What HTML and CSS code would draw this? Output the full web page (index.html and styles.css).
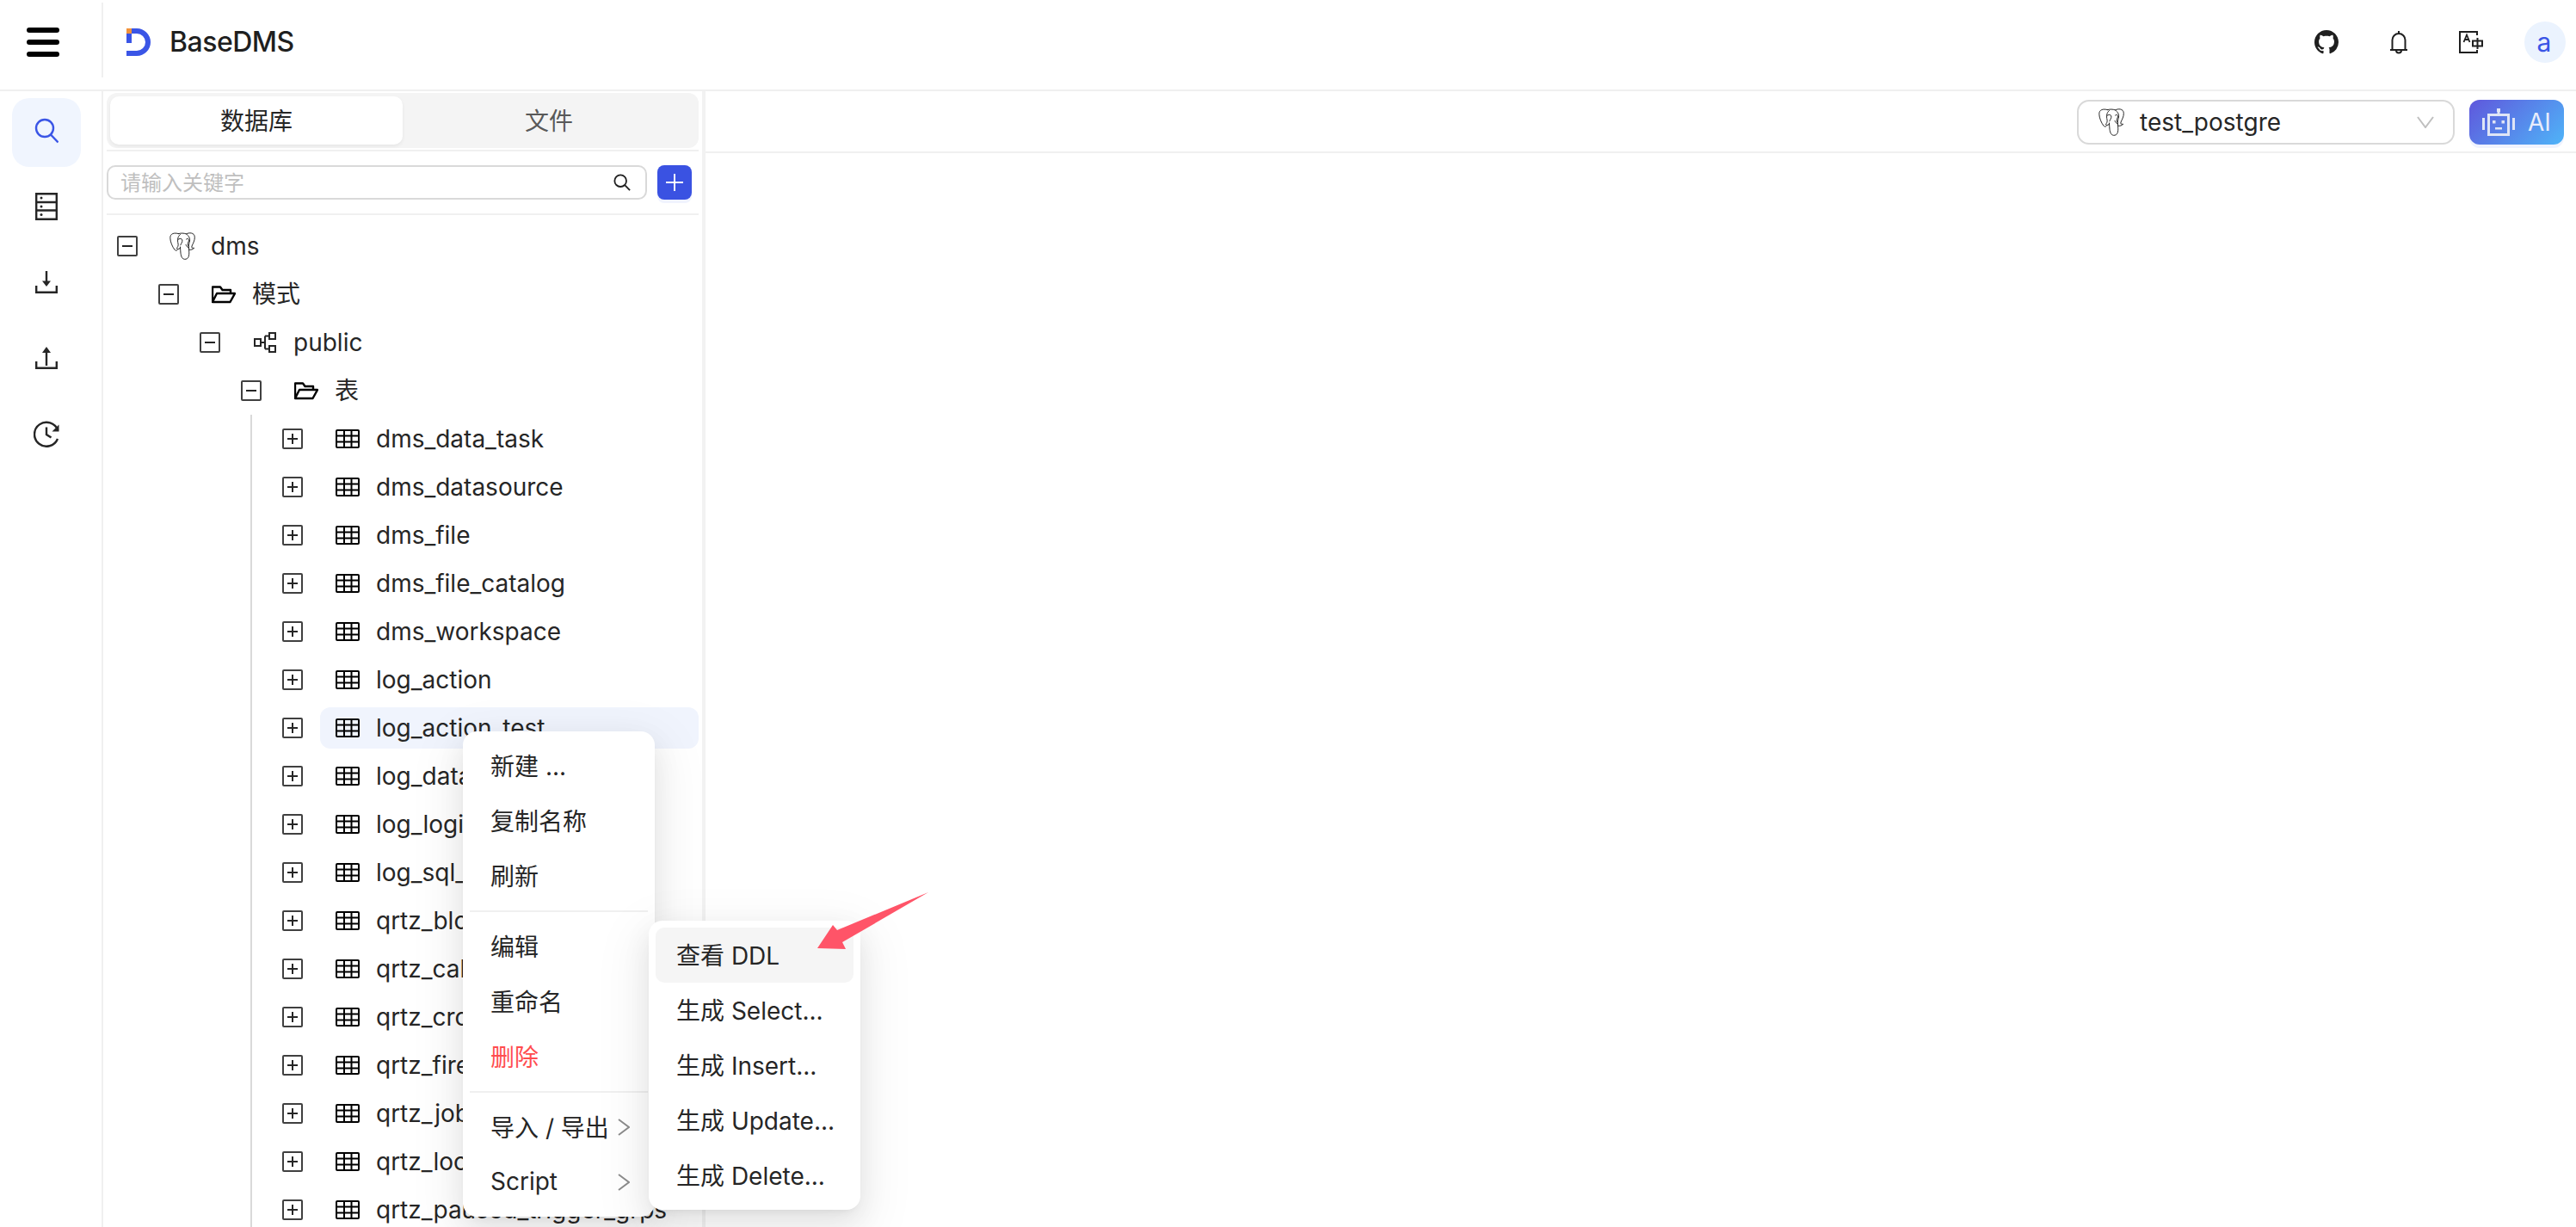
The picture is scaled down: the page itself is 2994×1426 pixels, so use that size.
FILE: index.html
```html
<!DOCTYPE html>
<html lang="zh-CN">
<head>
<meta charset="utf-8">
<title>BaseDMS</title>
<link rel="stylesheet" href="styles.css">
</head>
<body>
<svg class="defs" width="0" height="0" aria-hidden="true">
  <symbol id="pg" viewBox="0 0 30 32">
    <g fill="none" stroke="#111" stroke-width=".9" stroke-linecap="round" stroke-linejoin="round">
      <path d="M10.5 1.6C5.5.2 .8 1.2 .8 6.5c0 4.500 2.700 10.500 5 13.500 1.500 1.800 3.200 1.300 4-.5"/>
      <path d="M10.500 1.600c2.800-.8 6-.8 9 .3 3-1.700 9.500-2 9.800 3.600.2 4-2 7.500-3.300 10.500-.6 2 .3 2.500 2.600 2.200-1 1.700-4 2.500-5.800 2"/>
      <path d="M12.500 2.500C9.500 4.500 9 9 10 13c.6 2.500-.5 4.500-1.800 5.500 1.500 1.500 4 1 4.300-.5"/>
      <path d="M19.500 1.900c3 2 5 5.500 3.700 9.500-.9 3-1 5.500-.6 9 .4 4.500.5 10-3.600 10.800-4.500.8-5.500-3.500-6-7-.3-2.300-.3-5-.5-7.200"/>
      <path d="M9.800 8.500c1.500-1.700 4.500-1.500 5 .3.600 2-1.200 4.200-2 6"/>
      <path d="M19.500 8c1-1 2.800-.6 3 .6.300 1.800-1 3-1.300 4.900-.1 1.200.3 2 .7 2.700"/>
      <path d="M19 14.500c.7 1.500 1.500 2.800 3.400 3.500"/>
    </g>
  </symbol>
  <symbol id="minus" viewBox="0 0 24 24">
    <rect x="1" y="1" width="22" height="22" rx="1" fill="#fff" stroke="#404040" stroke-width="2"/>
    <path d="M6 12h12" stroke="#262626" stroke-width="2"/>
  </symbol>
  <symbol id="plus" viewBox="0 0 24 24">
    <rect x="1" y="1" width="22" height="22" rx="1" fill="#fff" stroke="#404040" stroke-width="2"/>
    <path d="M6 12h12M12 6v12" stroke="#262626" stroke-width="2"/>
  </symbol>
  <symbol id="folder" viewBox="0 0 28 22">
    <path d="M1 20V2.500h9l2.500 3.500H22v4M1 20h20.500L27 10H6L1 20Z" fill="none" stroke="#000" stroke-width="2.400" stroke-linejoin="round"/>
  </symbol>
  <symbol id="table" viewBox="0 0 28 22">
    <rect x="1" y="1" width="26" height="20" rx="1" fill="none" stroke="#000" stroke-width="2"/>
    <path d="M1 7.500h26M1 14.500h26M10 1v20M18.500 1v20" stroke="#000" stroke-width="2" fill="none"/>
  </symbol>
</svg>

<div class="app">
  <header class="topbar">
    <div class="topbar-menu">
      <button class="burger" type="button" aria-label="menu"><i></i><i></i><i></i></button>
    </div>
    <div class="brand">
      <svg class="logo" viewBox="0 0 28 32" width="28" height="32">
        <path d="M6 3h6a10.500 10.500 0 0 1 0 26H0" fill="none" stroke="#3a55e6" stroke-width="6"/>
        <rect x="0" y="6" width="6" height="11" fill="#3a55e6"/>
        <rect x="0" y="0" width="6" height="6" fill="#f2923a"/>
      </svg>
      <span class="brand-name">BaseDMS</span>
    </div>
    <div class="topbar-actions">
      <svg class="act act-gh" viewBox="0 0 16 16" width="28" height="28"><path fill="#1f1f1f" d="M8 0C3.580 0 0 3.580 0 8c0 3.540 2.290 6.530 5.470 7.590.4.070.55-.17.55-.38 0-.19-.01-.82-.01-1.490-2.010.37-2.530-.49-2.690-.94-.09-.23-.48-.94-.82-1.130-.28-.15-.68-.52-.01-.53.63-.01 1.080.58 1.230.82.720 1.210 1.870.87 2.330.66.070-.52.280-.87.510-1.070-1.780-.2-3.640-.89-3.640-3.950 0-.87.310-1.590.820-2.150-.08-.2-.36-1.020.08-2.120 0 0 .67-.21 2.200.82.640-.18 1.320-.27 2-.27s1.360.09 2 .27c1.530-1.040 2.200-.82 2.200-.82.44 1.100.16 1.920.08 2.120.51.560.82 1.270.82 2.150 0 3.070-1.870 3.750-3.650 3.950.29.250.54.730.54 1.480 0 1.070-.01 1.930-.01 2.200 0 .21.150.460.550.380A8.010 8.010 0 0 0 16 8c0-4.420-3.580-8-8-8Z"/></svg>
      <svg class="act act-bell" viewBox="0 0 24 28" width="24" height="28"><path d="M2 23h20M4.500 23V11.500a7.500 7.500 0 0 1 15 0V23M12 1v3M9 23.500a3 3 0 0 0 6 0" fill="none" stroke="#1f1f1f" stroke-width="2" stroke-linejoin="round"/></svg>
      <svg class="act act-lang" viewBox="0 0 28 26" width="28" height="26"><path d="M21 5V1H1v24h20v-3" fill="none" stroke="#1f1f1f" stroke-width="2"/><path d="M5.500 13 9 4.500 12.500 13M6.800 10h4.400" fill="none" stroke="#1f1f1f" stroke-width="1.800"/><path d="M16 11.500h11v6H16zM21.500 8v13" fill="none" stroke="#1f1f1f" stroke-width="2"/></svg>
      <span class="avatar">a</span>
    </div>
  </header>

  <div class="body">
    <nav class="rail">
      <a class="rail-btn is-active">
        <svg viewBox="0 0 28 30" width="28" height="30"><circle cx="12" cy="12" r="10" fill="none" stroke="#3a55e6" stroke-width="2.400"/><path d="M19 19.500 27.500 28.500" stroke="#3a55e6" stroke-width="2.400"/></svg>
      </a>
      <a class="rail-btn">
        <svg viewBox="0 0 26 32" width="26" height="32"><path d="M1.200 1.200h23.600v29.600H1.200zM1.200 11h23.600M1.200 20.500h23.600" fill="none" stroke="#262626" stroke-width="2.400"/><circle cx="7" cy="6" r="1.500" fill="#262626"/><circle cx="7" cy="16" r="1.500" fill="#262626"/><circle cx="7" cy="25.500" r="1.500" fill="#262626"/></svg>
      </a>
      <a class="rail-btn">
        <svg viewBox="0 0 26 26" width="26" height="26"><path d="M13 0v15" stroke="#262626" stroke-width="2.400"/><path d="M8 11.500h10L13 18Z" fill="#262626"/><path d="M1.200 17v7.800h23.600V17" fill="none" stroke="#262626" stroke-width="2.400"/></svg>
      </a>
      <a class="rail-btn">
        <svg viewBox="0 0 26 26" width="26" height="26"><path d="M13 5v17" stroke="#262626" stroke-width="2.400"/><path d="M8 7h10L13 0Z" fill="#262626"/><path d="M1.200 17v7.800h23.600V17" fill="none" stroke="#262626" stroke-width="2.400"/></svg>
      </a>
      <a class="rail-btn">
        <svg viewBox="0 0 30 32" width="30" height="32"><path d="M28 22a14 14 0 1 1 .2-10" fill="none" stroke="#262626" stroke-width="2.400"/><path d="M29.500 5.500v8h-8Z" fill="#262626"/><path d="M15 8.500v8.500l5.500 3.500" fill="none" stroke="#262626" stroke-width="2.400"/></svg>
      </a>
    </nav>

    <aside class="panel">
      <div class="tabs">
        <button class="tab is-active" type="button">数据库</button>
        <button class="tab" type="button">文件</button>
      </div>
      <div class="search-row">
        <label class="search">
          <span class="placeholder">请输入关键字</span>
          <svg viewBox="0 0 22 22" width="22" height="20"><circle cx="9" cy="9" r="7.500" fill="none" stroke="#1f1f1f" stroke-width="2"/><path d="M14.500 14.500 21 21" stroke="#1f1f1f" stroke-width="2"/></svg>
        </label>
        <button class="add" type="button" aria-label="add"><svg viewBox="0 0 20 20" width="20" height="20"><path d="M0 10h20M10 0v20" stroke="#fff" stroke-width="2"/></svg></button>
      </div>
      <div class="tree">
        <div class="row"><svg class="tog"><use href="#minus"/></svg><svg class="ico ico-pg"><use href="#pg"/></svg><span class="label">dms</span></div>
        <div class="kids">
          <div class="row"><svg class="tog"><use href="#minus"/></svg><svg class="ico ico-table"><use href="#folder"/></svg><span class="label">模式</span></div>
          <div class="kids">
            <div class="row"><svg class="tog"><use href="#minus"/></svg>
              <svg class="ico ico-schema" viewBox="0 0 26 24"><path d="M1 8h7v8H1zM18 1h7v7h-7zM18 16h7v7h-7zM8 12h5M13 4.500h5M13 19.500h5M13 4.500v15" fill="none" stroke="#262626" stroke-width="2"/></svg>
              <span class="label">public</span></div>
            <div class="kids">
              <div class="row"><svg class="tog"><use href="#minus"/></svg><svg class="ico ico-table"><use href="#folder"/></svg><span class="label">表</span></div>
              <div class="guide">
                <div class="row"><svg class="tog"><use href="#plus"/></svg><svg class="ico ico-table"><use href="#table"/></svg><span class="label">dms_data_task</span></div>
                <div class="row"><svg class="tog"><use href="#plus"/></svg><svg class="ico ico-table"><use href="#table"/></svg><span class="label">dms_datasource</span></div>
                <div class="row"><svg class="tog"><use href="#plus"/></svg><svg class="ico ico-table"><use href="#table"/></svg><span class="label">dms_file</span></div>
                <div class="row"><svg class="tog"><use href="#plus"/></svg><svg class="ico ico-table"><use href="#table"/></svg><span class="label">dms_file_catalog</span></div>
                <div class="row"><svg class="tog"><use href="#plus"/></svg><svg class="ico ico-table"><use href="#table"/></svg><span class="label">dms_workspace</span></div>
                <div class="row"><svg class="tog"><use href="#plus"/></svg><svg class="ico ico-table"><use href="#table"/></svg><span class="label">log_action</span></div>
                <div class="row is-selected"><svg class="tog"><use href="#plus"/></svg><svg class="ico ico-table"><use href="#table"/></svg><span class="label">log_action_test</span></div>
                <div class="row"><svg class="tog"><use href="#plus"/></svg><svg class="ico ico-table"><use href="#table"/></svg><span class="label">log_datasource</span></div>
                <div class="row"><svg class="tog"><use href="#plus"/></svg><svg class="ico ico-table"><use href="#table"/></svg><span class="label">log_login</span></div>
                <div class="row"><svg class="tog"><use href="#plus"/></svg><svg class="ico ico-table"><use href="#table"/></svg><span class="label">log_sql_exec</span></div>
                <div class="row"><svg class="tog"><use href="#plus"/></svg><svg class="ico ico-table"><use href="#table"/></svg><span class="label">qrtz_blob_triggers</span></div>
                <div class="row"><svg class="tog"><use href="#plus"/></svg><svg class="ico ico-table"><use href="#table"/></svg><span class="label">qrtz_calendars</span></div>
                <div class="row"><svg class="tog"><use href="#plus"/></svg><svg class="ico ico-table"><use href="#table"/></svg><span class="label">qrtz_cron_triggers</span></div>
                <div class="row"><svg class="tog"><use href="#plus"/></svg><svg class="ico ico-table"><use href="#table"/></svg><span class="label">qrtz_fired_triggers</span></div>
                <div class="row"><svg class="tog"><use href="#plus"/></svg><svg class="ico ico-table"><use href="#table"/></svg><span class="label">qrtz_job_details</span></div>
                <div class="row"><svg class="tog"><use href="#plus"/></svg><svg class="ico ico-table"><use href="#table"/></svg><span class="label">qrtz_locks</span></div>
                <div class="row"><svg class="tog"><use href="#plus"/></svg><svg class="ico ico-table"><use href="#table"/></svg><span class="label">qrtz_paused_trigger_grps</span></div>
              </div>
            </div>
          </div>
        </div>
      </div>
    </aside>

    <main class="workspace">
      <div class="toolbar">
        <div class="conn">
          <svg class="conn-pg"><use href="#pg"/></svg>
          <span class="conn-name">test_postgre</span>
          <svg class="conn-caret" viewBox="0 0 20 14" width="20" height="14"><path d="M1 1 10 13 19 1" fill="none" stroke="#bfbfbf" stroke-width="2"/></svg>
        </div>
        <button class="ai" type="button">
          <svg viewBox="0 0 38 32" width="38" height="32"><g fill="none" stroke="#dfe5f6" stroke-width="3"><rect x="7.500" y="7.500" width="23" height="23"/><path d="M1.500 11v14M36.500 11v14M19 7V2"/></g><rect x="17" y="0" width="4" height="4" fill="#dfe5f6"/><rect x="12" y="14" width="3.500" height="3.500" fill="#dfe5f6"/><rect x="22.500" y="14" width="3.500" height="3.500" fill="#dfe5f6"/><rect x="15" y="22" width="8" height="2.500" fill="#dfe5f6"/></svg>
          <span>AI</span>
        </button>
      </div>
    </main>
  </div>
</div>

<ul class="menu menu-main">
  <li>新建 ...</li>
  <li>复制名称</li>
  <li>刷新</li>
  <li class="sep"></li>
  <li>编辑</li>
  <li>重命名</li>
  <li class="danger">删除</li>
  <li class="sep"></li>
  <li class="has-sub">导入 / 导出<svg viewBox="0 0 14 20" width="14" height="20"><path d="M1 1 13 10 1 19" fill="none" stroke="#8c8c8c" stroke-width="2"/></svg></li>
  <li class="has-sub">Script<svg viewBox="0 0 14 20" width="14" height="20"><path d="M1 1 13 10 1 19" fill="none" stroke="#8c8c8c" stroke-width="2"/></svg></li>
</ul>
<ul class="menu menu-sub">
  <li class="is-hover">查看 DDL</li>
  <li>生成 Select...</li>
  <li>生成 Insert...</li>
  <li>生成 Update...</li>
  <li>生成 Delete...</li>
</ul>
<svg class="arrow" viewBox="0 0 130 66" width="130" height="66"><path d="M0 65 18 38 23 44 129 0 29 58 33 66Z" fill="#ff5468"/></svg>
</body>
</html>
```
FILE: styles.css
```css
* { box-sizing: border-box; }
html, body { margin: 0; height: 100%; overflow: hidden; background: #fff; }
body {
  position: relative;
  font-family: Inter, "Noto Sans CJK SC", sans-serif;
  font-size: 28px;
  color: #262626;
}
button { font: inherit; border: 0; background: none; padding: 0; color: inherit; }
ul { list-style: none; margin: 0; padding: 0; }
.defs { position: absolute; }

.app { display: flex; flex-direction: column; height: 1426px; }

/* top bar */
.topbar {
  flex: none;
  height: 106px;
  display: flex;
  align-items: flex-start;
  border-bottom: 2px solid #f0f0f0;
}
.topbar-menu {
  flex: none;
  width: 120px;
  height: 87px;
  margin-top: 3px;
  border-right: 2px solid #f0f0f0;
  padding: 29px 0 0 31px;
}
.burger { display: flex; flex-direction: column; gap: 8px; width: 38px; }
.burger i { display: block; height: 6px; border-radius: 3px; background: #000; }
.brand { display: flex; align-items: center; gap: 22px; padding: 33px 0 0 27px; height: 65px; }
.logo { flex: none; }
.brand-name { font-size: 32px; font-weight: 500; color: #1f1f1f; line-height: 32px; letter-spacing: -.5px; }
.topbar-actions { margin-left: auto; display: flex; align-items: center; padding: 25px 12px 0 0; height: 73px; }
.act { flex: none; display: block; }
.act-gh { margin-right: 58px; }
.act-bell { margin-right: 58px; }
.act-lang { margin-right: 48px; }
.avatar {
  width: 48px; height: 48px; border-radius: 50%;
  background: #ebf3fe; color: #3a55e6;
  display: flex; align-items: center; justify-content: center;
  font-size: 30px;
  padding-right: 2px;
}

.body { flex: 1; display: flex; min-height: 0; }

/* rail */
.rail {
  flex: none;
  width: 120px;
  border-right: 2px solid #f0f0f0;
  padding: 8px 0 0 14px;
  display: flex;
  flex-direction: column;
  gap: 8px;
}
.rail-btn { width: 80px; height: 80px; padding-bottom: 4px; border-radius: 20px; display: flex; align-items: center; justify-content: center; }
.rail-btn.is-active { background: #f0f5fe; }

/* left panel */
.panel {
  flex: none;
  width: 700px;
  border-right: 4px solid #f2f2f2;
  display: flex;
  flex-direction: column;
  overflow: hidden;
}
.tabs {
  flex: none;
  margin: 2px 4px 0;
  height: 64px;
  padding: 4px;
  background: #f4f4f4;
  border-radius: 12px;
  display: flex;
}
.tab { flex: 1; color: #595959; border-radius: 10px; padding-bottom: 3px; }
.tab.is-active { background: #fff; color: #262626; box-shadow: 0 2px 4px rgba(0,0,0,.06); }
.search-row {
  flex: none;
  margin: 2px 4px 0;
  border-top: 2px solid #f0f0f0;
  border-bottom: 2px solid #f0f0f0;
  height: 76px;
  padding-top: 16px;
  display: flex;
  align-items: flex-start;
  gap: 12px;
}
.search {
  width: 628px;
  height: 40px;
  border: 2px solid #d9d9d9;
  border-radius: 10px;
  display: flex;
  align-items: center;
  justify-content: space-between;
  padding: 0 16px 0 14px;
}
.placeholder { font-size: 24px; color: #bfbfbf; margin-bottom: 4px; }
.add {
  width: 40px; height: 40px; border-radius: 8px;
  background: #3a52e2;
  display: flex; align-items: center; justify-content: center;
  box-shadow: 0 4px 0 #f0f3fe;
}

/* tree */
.tree { padding: 8px 4px 0 16px; flex: 1; }
.row { height: 56px; display: flex; align-items: center; }
.kids { padding-left: 48px; }
.guide { margin: 4px 0 0 11px; border-left: 2px solid #d9d9d9; padding-left: 35px; }
.guide .row:first-child { margin-top: -4px; }
.tog { flex: none; width: 24px; height: 24px; margin-right: 36px; }
.ico { flex: none; width: 32px; height: 24px; margin-right: 17px; }
.ico-pg { height: 32px; }
.ico-schema { height: 24px; }
.ico-table { width: 28px; height: 22px; margin-left: 2px; margin-right: 19px; }
.label { line-height: 48px; white-space: nowrap; }
.row.is-selected { position: relative; }
.row.is-selected::before {
  content: "";
  position: absolute;
  left: 44px; right: 0; top: 4px; bottom: 4px;
  background: #f0f4fd;
  border-radius: 12px;
}
.row.is-selected > * { position: relative; }

/* workspace */
.workspace { flex: 1; min-width: 0; }
.toolbar {
  height: 72px;
  border-bottom: 2px solid #f0f0f0;
  padding: 10px 14px 0 0;
  display: flex;
  justify-content: flex-end;
  align-items: flex-start;
  gap: 17px;
}
.conn {
  width: 439px;
  height: 52px;
  border: 2px solid #d9d9d9;
  border-radius: 14px;
  display: flex;
  align-items: center;
  padding: 0 22px 0 23px;
}
.conn-pg { flex: none; width: 30px; height: 32px; margin-right: 18px; }
.conn-name { flex: 1; }
.conn-caret { flex: none; }
.ai {
  width: 110px;
  height: 52px;
  border-radius: 12px;
  background: linear-gradient(135deg, #5f57dc, #4fb4f8);
  color: #e8edfb;
  display: flex;
  align-items: center;
  padding-left: 15px;
  gap: 15px;
  box-shadow: 0 4px 0 #f0f3fe;
}

/* context menus */
.menu {
  position: absolute;
  background: #fff;
  border-radius: 16px;
  padding: 8px;
  box-shadow: 0 12px 32px rgba(0,0,0,.08), 0 6px 12px -8px rgba(0,0,0,.12), 0 18px 56px 16px rgba(0,0,0,.05);
}
.menu li { height: 64px; border-radius: 10px; padding: 0 24px 3px; display: flex; align-items: center; white-space: nowrap; }
.menu li.sep { height: 2px; margin: 8px 0; padding: 0; background: #f0f0f0; border-radius: 0; }
.menu li.danger { color: #ff4d4f; }
.menu li.has-sub { justify-content: space-between; padding-right: 21px; }
.menu li.has-sub svg { margin-top: 3px; }
.menu li.is-hover { background: #f5f5f5; }
.menu-main { left: 538px; top: 850px; width: 223px; }
.menu-sub { left: 754px; top: 1070px; width: 246px; }
.arrow { position: absolute; left: 950px; top: 1037px; }
```
